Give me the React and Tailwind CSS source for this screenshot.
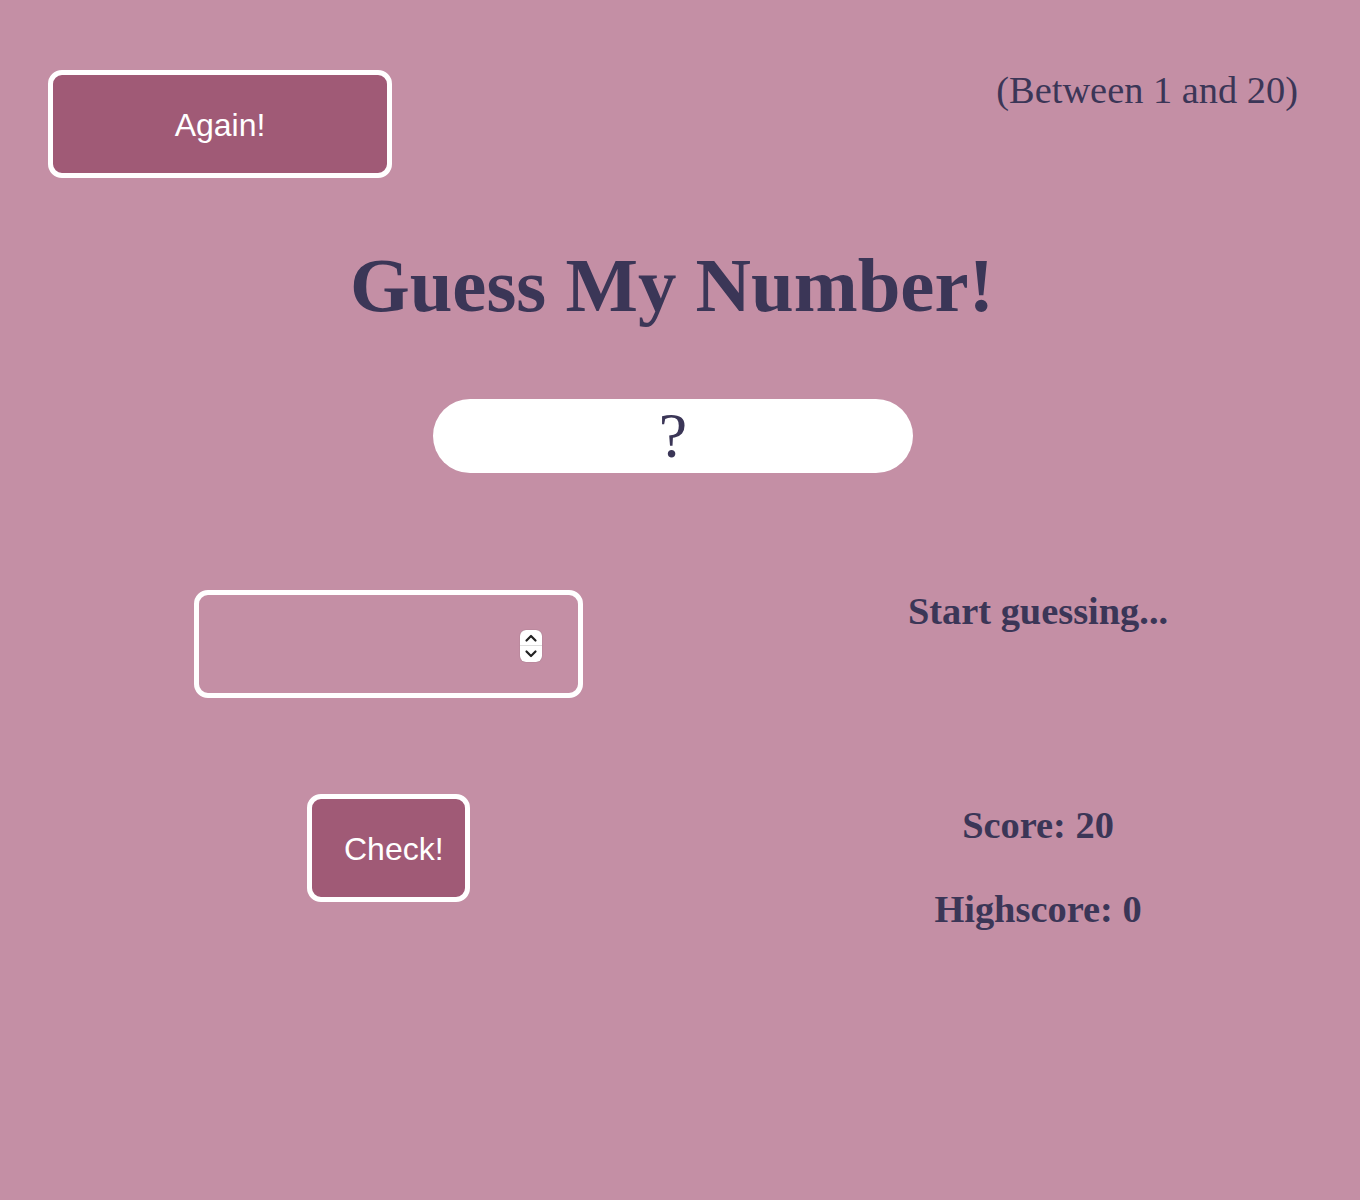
import React from "react";

const serif = { fontFamily: '"Liberation Serif", "Times New Roman", serif' };

function Spinner() {
  return (
    <div className="mt-[4px] flex h-[32px] w-[22px] flex-col items-center justify-between rounded-[6px] bg-white shadow-[0_0_1px_rgba(0,0,0,0.4)]">
      <svg width="22" height="16" viewBox="0 0 22 16">
        <path d="M6.5 10.5 L11 6 L15.5 10.5" fill="none" stroke="#222" strokeWidth="2.2" strokeLinecap="round" strokeLinejoin="round" />
        <line x1="0" y1="15.5" x2="22" y2="15.5" stroke="#ddd" strokeWidth="1" />
      </svg>
      <svg width="22" height="16" viewBox="0 0 22 16">
        <path d="M6.5 5.5 L11 10 L15.5 5.5" fill="none" stroke="#222" strokeWidth="2.2" strokeLinecap="round" strokeLinejoin="round" />
      </svg>
    </div>
  );
}

export default function App() {
  return (
    <div className="min-h-[1200px] w-full bg-[#c48fa5] text-[#3b3657]" style={serif}>
      <header className="flex items-start justify-between pl-[48px] pr-[62px] pt-[70px]">
        <button
          className="h-[108px] w-[344px] rounded-[14px] border-[5px] border-white bg-[#a05a76] pt-[2px] text-[32px] leading-none text-white"
          style={{ fontFamily: '"Liberation Sans", Arial, sans-serif' }}
        >
          Again!
        </button>
        <p className="mt-[1px] text-[38.4px] leading-none">(Between 1 and 20)</p>
      </header>

      <h1 className="mt-[70px] pr-[16px] text-center text-[76.8px] font-bold leading-none">Guess My Number!</h1>

      <div className="mt-[74px] flex justify-center pr-[14px]">
        <div className="flex h-[74px] w-[480px] items-center justify-center rounded-full bg-white text-[64px] leading-none">
          ?
        </div>
      </div>

      <main className="mt-[117px] flex">
        <section className="flex w-[777px] flex-col items-center gap-[96px]">
          <div className="flex h-[108px] w-[389px] items-center rounded-[14px] border-[5px] border-white pr-[36px]">
            <input
              type="text"
              inputMode="numeric"
              className="h-full min-w-0 flex-1 bg-transparent px-[20px] text-[40px] outline-none"
            />
            <Spinner />
          </div>
          <button
            className="h-[108px] w-[163px] rounded-[14px] border-[5px] border-white bg-[#a05a76] pl-[32px] pt-[2px] text-left text-[32px] leading-none text-white"
            style={{ fontFamily: '"Liberation Sans", Arial, sans-serif' }}
          >
            Check!
          </button>
        </section>
        <section className="flex w-[522px] flex-col items-center pt-[2px]">
          <p className="text-[38.4px] font-bold leading-none">Start guessing...</p>
          <p className="mt-[176px] text-[38.4px] font-bold leading-none">Score: 20</p>
          <p className="mt-[45px] text-[38.4px] font-bold leading-none">Highscore: 0</p>
        </section>
      </main>
    </div>
  );
}
